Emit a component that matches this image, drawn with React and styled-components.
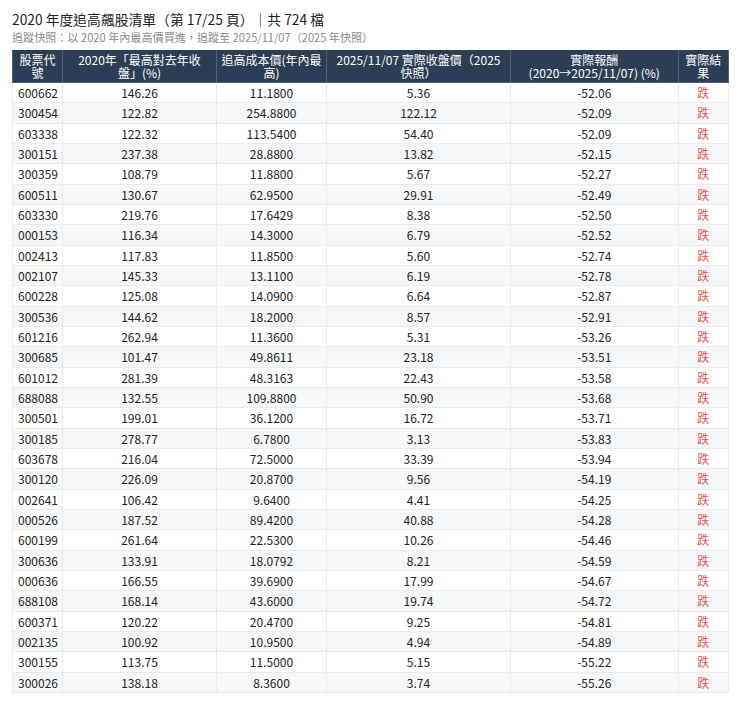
import React from "react";
import styled, { createGlobalStyle } from "styled-components";

const Global = createGlobalStyle`
  html, body { margin: 0; padding: 0; background: #fff; }
  body { font-family: "Noto Sans CJK TC", "Noto Sans", sans-serif; color: #222; }
`;

const Page = styled.div`
  padding: 9px 12px 12px 12px;
`;

const Title = styled.h1`
  margin: 0;
  font-size: 13.8px;
  font-weight: 400;
  line-height: 20px;
  color: #222;
`;

const Subtitle = styled.div`
  font-size: 11.1px;
  line-height: 16px;
  color: #8a8a8a;
  margin-bottom: 5px;
`;

const Table = styled.table`
  width: 716px;
  border-collapse: collapse;
  table-layout: fixed;
  font-size: 12px;
`;

const Th = styled.th`
  background: #2c3e55;
  color: #fff;
  font-weight: 400;
  line-height: 12.4px;
  padding: 3px 4px;
  height: 32px;
  box-sizing: border-box;
  text-align: center;
  white-space: nowrap;
  border: 1px solid #50627a;
  border-top-color: #2c3e55;
`;

const Row = styled.tr`
  background: ${(p) => (p.$odd ? "#f6f7f8" : "#fff")};
`;

const Td = styled.td`
  padding: 1px 5px;
  line-height: 17.33px;
  text-align: ${(p) => (p.$left ? "left" : "center")};
  color: ${(p) => (p.$down ? "#e0584d" : "#222")};
  border: 1px solid #e9ebee;
`;

const rows = [
  ["600662", "146.26", "11.1800", "5.36", "-52.06"],
  ["300454", "122.82", "254.8800", "122.12", "-52.09"],
  ["603338", "122.32", "113.5400", "54.40", "-52.09"],
  ["300151", "237.38", "28.8800", "13.82", "-52.15"],
  ["300359", "108.79", "11.8800", "5.67", "-52.27"],
  ["600511", "130.67", "62.9500", "29.91", "-52.49"],
  ["603330", "219.76", "17.6429", "8.38", "-52.50"],
  ["000153", "116.34", "14.3000", "6.79", "-52.52"],
  ["002413", "117.83", "11.8500", "5.60", "-52.74"],
  ["002107", "145.33", "13.1100", "6.19", "-52.78"],
  ["600228", "125.08", "14.0900", "6.64", "-52.87"],
  ["300536", "144.62", "18.2000", "8.57", "-52.91"],
  ["601216", "262.94", "11.3600", "5.31", "-53.26"],
  ["300685", "101.47", "49.8611", "23.18", "-53.51"],
  ["601012", "281.39", "48.3163", "22.43", "-53.58"],
  ["688088", "132.55", "109.8800", "50.90", "-53.68"],
  ["300501", "199.01", "36.1200", "16.72", "-53.71"],
  ["300185", "278.77", "6.7800", "3.13", "-53.83"],
  ["603678", "216.04", "72.5000", "33.39", "-53.94"],
  ["300120", "226.09", "20.8700", "9.56", "-54.19"],
  ["002641", "106.42", "9.6400", "4.41", "-54.25"],
  ["000526", "187.52", "89.4200", "40.88", "-54.28"],
  ["600199", "261.64", "22.5300", "10.26", "-54.46"],
  ["300636", "133.91", "18.0792", "8.21", "-54.59"],
  ["000636", "166.55", "39.6900", "17.99", "-54.67"],
  ["688108", "168.14", "43.6000", "19.74", "-54.72"],
  ["600371", "120.22", "20.4700", "9.25", "-54.81"],
  ["002135", "100.92", "10.9500", "4.94", "-54.89"],
  ["300155", "113.75", "11.5000", "5.15", "-55.22"],
  ["300026", "138.18", "8.3600", "3.74", "-55.26"],
];

const widths = [50, 154, 110, 184, 167.5, 50.5];

const headers = [
  ["股票代", "號"],
  ["2020年「最高對去年收", "盤」(%)"],
  ["追高成本價(年內最", "高)"],
  ["2025/11/07 實際收盤價（2025", "快照）"],
  ["實際報酬", "(2020→2025/11/07) (%)"],
  ["實際結", "果"],
];

export default function App() {
  return (
    <Page>
      <Global />
      <Title>2020 年度追高飆股清單（第 17/25 頁）｜共 724 檔</Title>
      <Subtitle>追蹤快照：以 2020 年內最高價買進，追蹤至 2025/11/07（2025 年快照）</Subtitle>
      <Table>
        <colgroup>
          {widths.map((w, i) => (
            <col key={i} style={{ width: w }} />
          ))}
        </colgroup>
        <thead>
          <tr>
            {headers.map(([a, b], i) => (
              <Th key={i}>
                {a}
                <br />
                {b}
              </Th>
            ))}
          </tr>
        </thead>
        <tbody>
          {rows.map((r, i) => (
            <Row key={r[0] + i} $odd={i % 2 === 1}>
              <Td $left>{r[0]}</Td>
              <Td>{r[1]}</Td>
              <Td>{r[2]}</Td>
              <Td>{r[3]}</Td>
              <Td>{r[4]}</Td>
              <Td $down>跌</Td>
            </Row>
          ))}
        </tbody>
      </Table>
    </Page>
  );
}
